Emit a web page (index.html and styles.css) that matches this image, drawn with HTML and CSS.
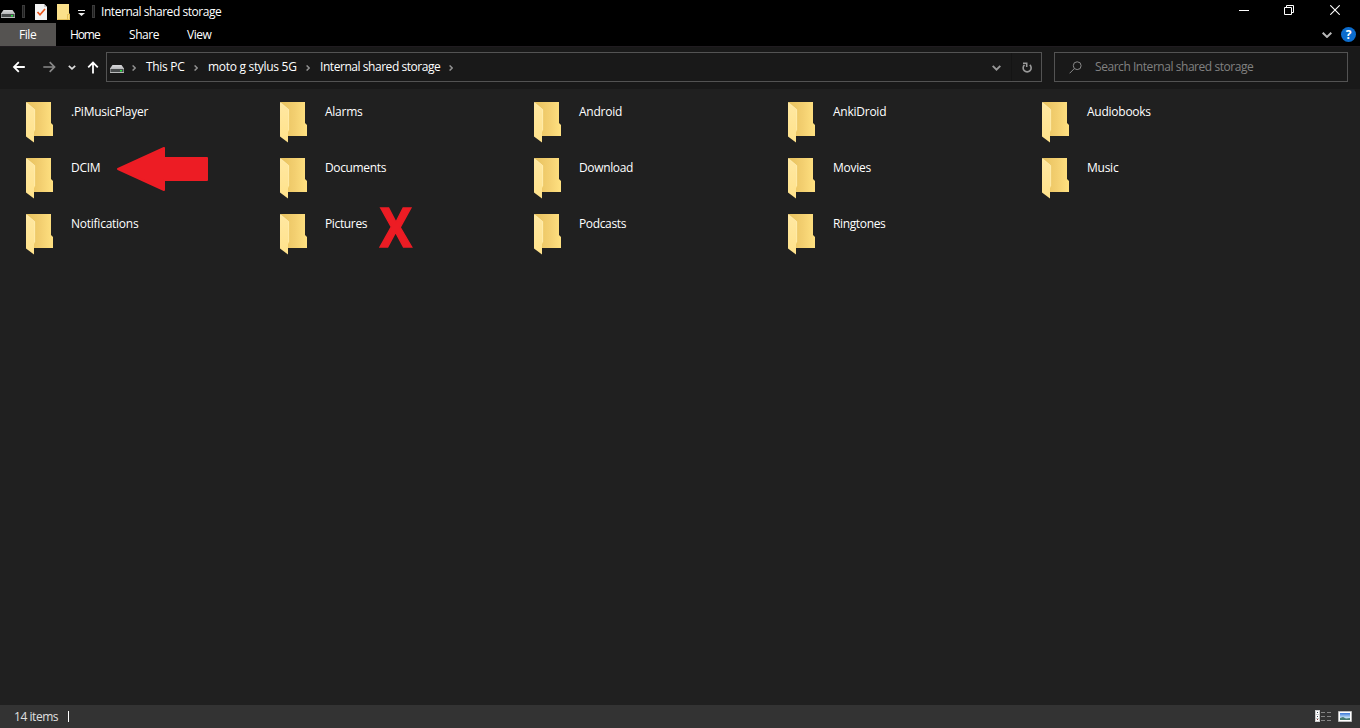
FILE: index.html
```html
<!DOCTYPE html>
<html lang="en">
<head>
<meta charset="utf-8">
<title>Internal shared storage</title>
<link rel="stylesheet" href="styles.css">
</head>
<body>
<svg class="defs" width="0" height="0" aria-hidden="true">
  <defs>
    <linearGradient id="back" x1="0" y1="0" x2="1" y2="0"><stop offset="0" stop-color="#e7c15d"/><stop offset=".55" stop-color="#f3cf70"/><stop offset="1" stop-color="#ffe181"/></linearGradient>
    <linearGradient id="flap" x1="0" y1="0" x2="0" y2="1"><stop offset="0" stop-color="#ffe8a2"/><stop offset="1" stop-color="#ffe28b"/></linearGradient>
    <linearGradient id="metal" x1="0" y1="0" x2="0" y2="1"><stop offset="0" stop-color="#d9d9db"/><stop offset="1" stop-color="#b8b9bb"/></linearGradient>
    <linearGradient id="sky" x1="0" y1="0" x2="0" y2="1"><stop offset="0" stop-color="#3b78d8"/><stop offset=".6" stop-color="#b9d9f4"/><stop offset="1" stop-color="#e5f1f8"/></linearGradient>
  </defs>
  <symbol id="folder" viewBox="0 0 28 41">
    <path fill="url(#back)" d="M0 0H25V21L27 23V34H8V10Z"/>
    <path fill="url(#flap)" d="M0 0L9 7.500V28.500L8 30V40.500L0 34.500Z"/>
    <path fill="none" stroke="#fff0b8" stroke-width=".6" d="M.6 .7L8.700 7.600V28"/>
  </symbol>
  <symbol id="drive" viewBox="0 0 14 8">
    <path fill="url(#metal)" d="M2.500 0H11.500L14 3.500V4H0V3.500Z"/>
    <rect y="3.500" width="14" height="4.500" rx=".5" fill="#b9babb"/>
    <rect x=".5" y="4" width="13" height="3" fill="#484b4c"/>
    <rect x="10" y="5" width="2" height="1.500" fill="#27e63e"/>
  </symbol>
  <symbol id="crumb" viewBox="0 0 4 6"><path d="M.6 .4L3.200 3L.6 5.600" fill="none" stroke="#929292" stroke-width="1.400"/></symbol>
</svg>
<div class="window">
  <header class="titlebar">
    <svg class="drive title-drive"><use href="#drive"/></svg>
    <i class="divider first"></i>
    <svg class="check" viewBox="0 0 12 16"><path fill="#f3f3f3" d="M0 0H9L12 3V16H0Z"/><path fill="#c9c9c9" d="M9 0V3H12Z"/><path d="M2.500 8L5 10.800L10 5" fill="none" stroke="#eb571d" stroke-width="1.700"/></svg>
    <svg class="new-folder" viewBox="0 0 13 16"><path fill="#fbe08a" d="M0 0H12V9L13 10.500V16H0Z"/><path fill="none" stroke="#dfb94d" stroke-width=".8" d="M.4 15.500H12.500V10.500H10.500V15.500"/></svg>
    <svg class="customize" viewBox="0 0 7 6"><path fill="#eee" d="M0 0H7V1H0ZM0 3H7L3.500 6Z"/></svg>
    <i class="divider second"></i>
    <h1 class="title">Internal shared storage</h1>
    <div class="controls">
      <svg class="minimize" viewBox="0 0 10 10"><path d="M0 4.500H10" stroke="#fff"/></svg>
      <svg class="restore" viewBox="0 0 10 10"><path d="M.5 2.500H7.500V9.500H.5ZM2.500 2.500V.5H9.500V7.500H7.500" fill="none" stroke="#fff"/></svg>
      <svg class="close" viewBox="0 0 10 10"><path d="M.3 .3L9.700 9.700M9.700 .3L.3 9.700" stroke="#fff" stroke-width="1.100"/></svg>
    </div>
  </header>
  <nav class="tabs">
    <span class="tab active">File</span>
    <span class="tab home">Home</span>
    <span class="tab share">Share</span>
    <span class="tab view">View</span>
    <div class="ribbon-tools">
      <svg class="expand" viewBox="0 0 10 6"><path d="M.7 .7L5 4.900L9.300 .7" fill="none" stroke="#b9b9b9" stroke-width="2"/></svg>
      <span class="help">?</span>
    </div>
  </nav>
  <div class="navigation">
    <svg class="back" viewBox="0 0 13 12"><path d="M12.800 6H2M6.800 1.200L2 6L6.800 10.800" fill="none" stroke="#fff" stroke-width="1.800"/></svg>
    <svg class="forward" viewBox="0 0 13 12"><path d="M.3 6H11.500M6.700 1.200L11.500 6L6.700 10.800" fill="none" stroke="#898989" stroke-width="1.700"/></svg>
    <svg class="recent" viewBox="0 0 8 5"><path d="M.8 .8L4 3.800L7.200 .8" fill="none" stroke="#ddd" stroke-width="1.700"/></svg>
    <svg class="up" viewBox="0 0 12 13"><path d="M6 12.500V1.500M1.200 6.300L6 1.500L10.800 6.300" fill="none" stroke="#fff" stroke-width="1.800"/></svg>
    <div class="address">
      <svg class="drive address-drive"><use href="#drive"/></svg>
      <svg class="crumb one"><use href="#crumb"/></svg>
      <span class="place pc">This PC</span>
      <svg class="crumb two"><use href="#crumb"/></svg>
      <span class="place phone">moto g stylus 5G</span>
      <svg class="crumb three"><use href="#crumb"/></svg>
      <span class="place storage">Internal shared storage</span>
      <svg class="crumb four"><use href="#crumb"/></svg>
      <div class="address-tools">
        <svg class="drop" viewBox="0 0 9 6"><path d="M.7 .8L4.500 4.600L8.300 .8" fill="none" stroke="#999" stroke-width="1.900"/></svg>
        <i class="split"></i>
        <svg class="refresh" viewBox="0 0 10 11"><path d="M2.500 2.900A4 4 0 1 0 7.800 2.900M1 1.200H4.700V5" fill="none" stroke="#9a9a9a" stroke-width="1.600"/></svg>
      </div>
    </div>
    <div class="search">
      <svg class="lens" viewBox="0 0 13 13"><circle cx="8.200" cy="4.700" r="3.900" fill="none" stroke="#898989"/><path d="M5.400 7.500L.6 12.300" stroke="#898989"/></svg>
      <span class="hint">Search Internal shared storage</span>
    </div>
  </div>
  <main class="files">
    <div class="item"><svg class="folder"><use href="#folder"/></svg><span>.PiMusicPlayer</span></div>
    <div class="item"><svg class="folder"><use href="#folder"/></svg><span>Alarms</span></div>
    <div class="item"><svg class="folder"><use href="#folder"/></svg><span>Android</span></div>
    <div class="item"><svg class="folder"><use href="#folder"/></svg><span>AnkiDroid</span></div>
    <div class="item"><svg class="folder"><use href="#folder"/></svg><span>Audiobooks</span></div>
    <div class="item"><svg class="folder"><use href="#folder"/></svg><span>DCIM</span>
      <svg class="arrow" viewBox="0 0 91 44"><path fill="#ed1c24" stroke="#ed1c24" stroke-width="2" stroke-linejoin="round" d="M1 22L47 1V11H90V33H47V43Z"/></svg></div>
    <div class="item"><svg class="folder"><use href="#folder"/></svg><span class="tight">Documents</span></div>
    <div class="item"><svg class="folder"><use href="#folder"/></svg><span class="tight">Download</span></div>
    <div class="item"><svg class="folder"><use href="#folder"/></svg><span>Movies</span></div>
    <div class="item"><svg class="folder"><use href="#folder"/></svg><span>Music</span></div>
    <div class="item"><svg class="folder"><use href="#folder"/></svg><span>Notifications</span></div>
    <div class="item"><svg class="folder"><use href="#folder"/></svg><span class="tight">Pictures</span><strong class="cross">X</strong></div>
    <div class="item"><svg class="folder"><use href="#folder"/></svg><span class="tight">Podcasts</span></div>
    <div class="item"><svg class="folder"><use href="#folder"/></svg><span class="tight">Ringtones</span></div>
  </main>
  <footer class="status">
    <span class="count">14 items</span><i class="caret"></i>
    <svg class="details" viewBox="0 0 16 12"><rect width="5" height="12" fill="#ccc"/><path fill="#fff" d="M1 1H4V4H1ZM1 5H4V8H1ZM1 9H4V11H1Z"/><path fill="#345" d="M2 2H3V3H2ZM2 6H3V7H2Z"/><path fill="#833" d="M2 9H3V10H2Z"/><path fill="#858585" d="M6 2H10V3H6ZM12 2H16V3H12ZM6 6H10V7H6ZM12 6H16V7H12ZM6 10H10V11H6ZM12 10H16V11H12Z"/></svg>
    <svg class="thumbs" viewBox="0 0 14 11"><path fill="#fff" stroke="#bbb" d="M.5 .5H13.500V10.500H.5Z"/><rect x="2" y="2" width="10" height="7" fill="url(#sky)"/><path fill="#477c72" d="M2 7L5 6L8 7.500L12 7V9H2Z"/></svg>
  </footer>
</div>
</body>
</html>
```
FILE: styles.css
```css
* { box-sizing: border-box; }
body { margin: 0; background: #202020; color: #fff; font: 12px/16px "Open Sans", sans-serif; }
svg { display: block; flex: none; }
.defs { position: absolute; }
.window { display: flex; flex-direction: column; width: 1360px; height: 728px; overflow: hidden; }
.window span, .title { white-space: nowrap; letter-spacing: -.45px; }
.titlebar { display: flex; height: 23px; background: #000; align-items: flex-start; }
.drive { width: 14px; height: 8px; }
.title-drive { margin: 10px 0 0 1px; }
.divider { width: 3px; height: 13px; margin-top: 5px; border: 1px solid #3b3b3b; background: #222; flex: none; }
.first { margin-left: 7px; }
.check { width: 12px; height: 16px; margin: 4px 0 0 10px; }
.new-folder { width: 13px; height: 16px; margin: 4px 0 0 10px; }
.customize { width: 7px; height: 6px; margin: 10px 0 0 8px; }
.second { margin-left: 7px; }
.title { margin: 4px 0 0 6px; font-size: 12px; font-weight: 400; }
.controls { display: flex; margin: 5px 20px 0 auto; }
.controls svg { width: 10px; height: 10px; }
.minimize { margin-top: 1px; }
.restore { margin-left: 35px; }
.close { margin-left: 36px; }
.tabs { display: flex; height: 23px; background: #000; line-height: 24px; }
.window .tab { letter-spacing: -.45px; }
.active { width: 56px; background: #555351; padding-left: 19px; }
.window .home { margin-left: 14px; width: 59px; letter-spacing: -1.1px; }
.share { width: 58px; }
.ribbon-tools { display: flex; align-items: center; margin: 0 4px 0 auto; }
.expand { width: 10px; height: 6px; }
.window .help { width: 15px; height: 15px; margin: 0 0 1px 9px; border-radius: 50%; background: #0c6ccd; text-align: center; font-size: 12px; font-weight: 700; line-height: 15px; letter-spacing: 0; }
.navigation { display: flex; height: 43px; background: #191919; border-top: 1px solid #201c20; padding-bottom: 2px; align-items: center; }
.back { width: 13px; height: 12px; margin-left: 12px; }
.forward { width: 13px; height: 12px; margin-left: 18px; }
.recent { width: 8px; height: 5px; margin-left: 12px; }
.up { width: 12px; height: 13px; margin: 1px 0 0 11px; }
.address { display: flex; width: 936px; height: 30px; margin-left: 7px; border: 1px solid #535353; align-items: center; }
.address-drive { margin: 4px 0 0 3px; }
.crumb { width: 4px; height: 6px; margin-top: 1px; }
.one { margin-left: 8px; }
.pc { width: 40px; margin-left: 10px; }
.two { margin-left: 8px; }
.phone { width: 90px; margin-left: 10px; }
.three { margin-left: 8px; }
.storage { width: 121px; margin-left: 10px; }
.four { margin-left: 8px; }
.window .pc { letter-spacing: -.3px; }
.window .phone { letter-spacing: -.3px; }
.address-tools { display: flex; margin: 0 9px 0 auto; align-items: center; }
.drop { width: 9px; height: 6px; margin-top: 2px; }
.split { width: 1px; height: 28px; margin: 0 10px; background: #141414; }
.refresh { width: 10px; height: 11px; }
.search { display: flex; width: 294px; height: 30px; margin-left: 12px; border: 1px solid #535353; align-items: center; color: #818181; }
.lens { width: 13px; height: 13px; margin-left: 14px; }
.hint { margin-left: 13px; }
.files { display: grid; flex: 1; grid-template-columns: repeat(5, 254px); grid-auto-rows: 56px; padding: 12px 0 0 26px; }
.item { position: relative; display: flex; align-items: flex-start; }
.folder { width: 28px; height: 41px; margin-top: 1px; }
.item > span { margin: 3px 0 0 17px; }
.window .item > span { letter-spacing: -.25px; }
.window .item > .tight { letter-spacing: -.36px; }
.arrow { position: absolute; left: 91px; top: -10px; width: 91px; height: 44px; }
.cross { position: absolute; left: 100px; top: -14px; color: #ed1c24; font: 700 54px/54px "Open Sans", sans-serif; transform: scaleX(.88); transform-origin: left; -webkit-text-stroke: 1.5px #ed1c24; }
.status { display: flex; height: 23px; padding: 0 8px 0 14px; background: #333; align-items: center; }
.caret { width: 1px; height: 11px; margin-left: 9px; background: #fff; }
.count { width: 45px; color: #e0e0e0; }
.details { width: 16px; height: 12px; margin: 0 0 1px auto; }
.thumbs { width: 14px; height: 11px; margin: 0 0 1px 7px; }
```
